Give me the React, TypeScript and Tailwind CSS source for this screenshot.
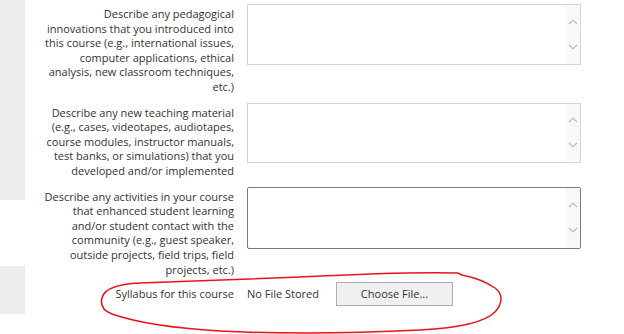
import React from "react";

function FakeTextarea({ h, dark }: { h: string; dark?: boolean }) {
  return (
    <div
      className={`w-[334px] ${h} shrink-0 flex justify-end bg-white border ${
        dark ? "border-[#7a7a7a] rounded-[2px]" : "border-[#d4d4d4]"
      }`}
    >
      <div className="w-[14px] h-full bg-[#f8f8f8] flex flex-col items-center justify-center gap-[19px]">
        <svg width="10" height="6" viewBox="0 0 10 6">
          <path d="M1 5 L5 1.2 L9 5" fill="none" stroke="#b5b5b5" strokeWidth="1.1" />
        </svg>
        <svg width="10" height="6" viewBox="0 0 10 6">
          <path d="M1 1 L5 4.8 L9 1" fill="none" stroke="#b5b5b5" strokeWidth="1.1" />
        </svg>
      </div>
    </div>
  );
}

function Label({ lines }: { lines: string[] }) {
  return (
    <div className="w-[209px] shrink-0 text-right pt-[3px] leading-[14.6px] whitespace-nowrap">
      {lines.map((l, i) => (
        <div key={i}>{l}</div>
      ))}
    </div>
  );
}

export default function App() {
  return (
    <div className="relative w-[624px] h-[334px] bg-white overflow-hidden flex text-[11px] text-[#333] font-['Open_Sans',sans-serif]">
      <div className="w-[25px] shrink-0 flex flex-col">
        <div className="h-[200px] bg-[#ececec]" />
        <div className="h-[66px]" />
        <div className="h-[48px] bg-[#ececec]" />
      </div>
      <div className="flex flex-col pt-[4px]">
        <div className="flex gap-[13px]">
          <Label
            lines={[
              "Describe any pedagogical",
              "innovations that you introduced into",
              "this course (e.g., international issues,",
              "computer applications, ethical",
              "analysis, new classroom techniques,",
              "etc.)",
            ]}
          />
          <FakeTextarea h="h-[61px]" />
        </div>
        <div className="flex gap-[13px] mt-[8px]">
          <Label
            lines={[
              "Describe any new teaching material",
              "(e.g., cases, videotapes, audiotapes,",
              "course modules, instructor manuals,",
              "test banks, or simulations) that you",
              "developed and/or implemented",
            ]}
          />
          <FakeTextarea h="h-[60px]" />
        </div>
        <div className="flex gap-[13px] mt-[8px]">
          <Label
            lines={[
              "Describe any activities in your course",
              "that enhanced student learning",
              "and/or student contact with the",
              "community (e.g., guest speaker,",
              "outside projects, field trips, field",
              "projects, etc.)",
            ]}
          />
          <FakeTextarea h="h-[62px]" dark />
        </div>
        <div className="flex items-center gap-[13px] mt-[5px] h-[24px]">
          <div className="w-[209px] shrink-0 text-right whitespace-nowrap">Syllabus for this course</div>
          <div className="w-[76px] shrink-0 whitespace-nowrap">No File Stored</div>
          <button className="w-[117px] h-[24px] bg-[#f0f0f0] border border-[#adadad] text-[11px] text-[#333]">
            Choose File...
          </button>
        </div>
      </div>
      <svg
        className="absolute left-0 top-0 pointer-events-none"
        width="624"
        height="334"
        viewBox="0 0 624 334"
      >
        <path
          d="M458 273 C420 272 360 274 300 277 C240 279 180 281 140 283 C118 284 104 289 102 298 C100 306 104 311 112 314 C135 322 170 328 220 331 C280 334 360 333 420 330 C460 328 485 322 495 312 C503 303 503 294 495 288 C485 281 472 277 462 275 L458 273"
          fill="none"
          stroke="#e8141a"
          strokeWidth="1.5"
        />
      </svg>
    </div>
  );
}
